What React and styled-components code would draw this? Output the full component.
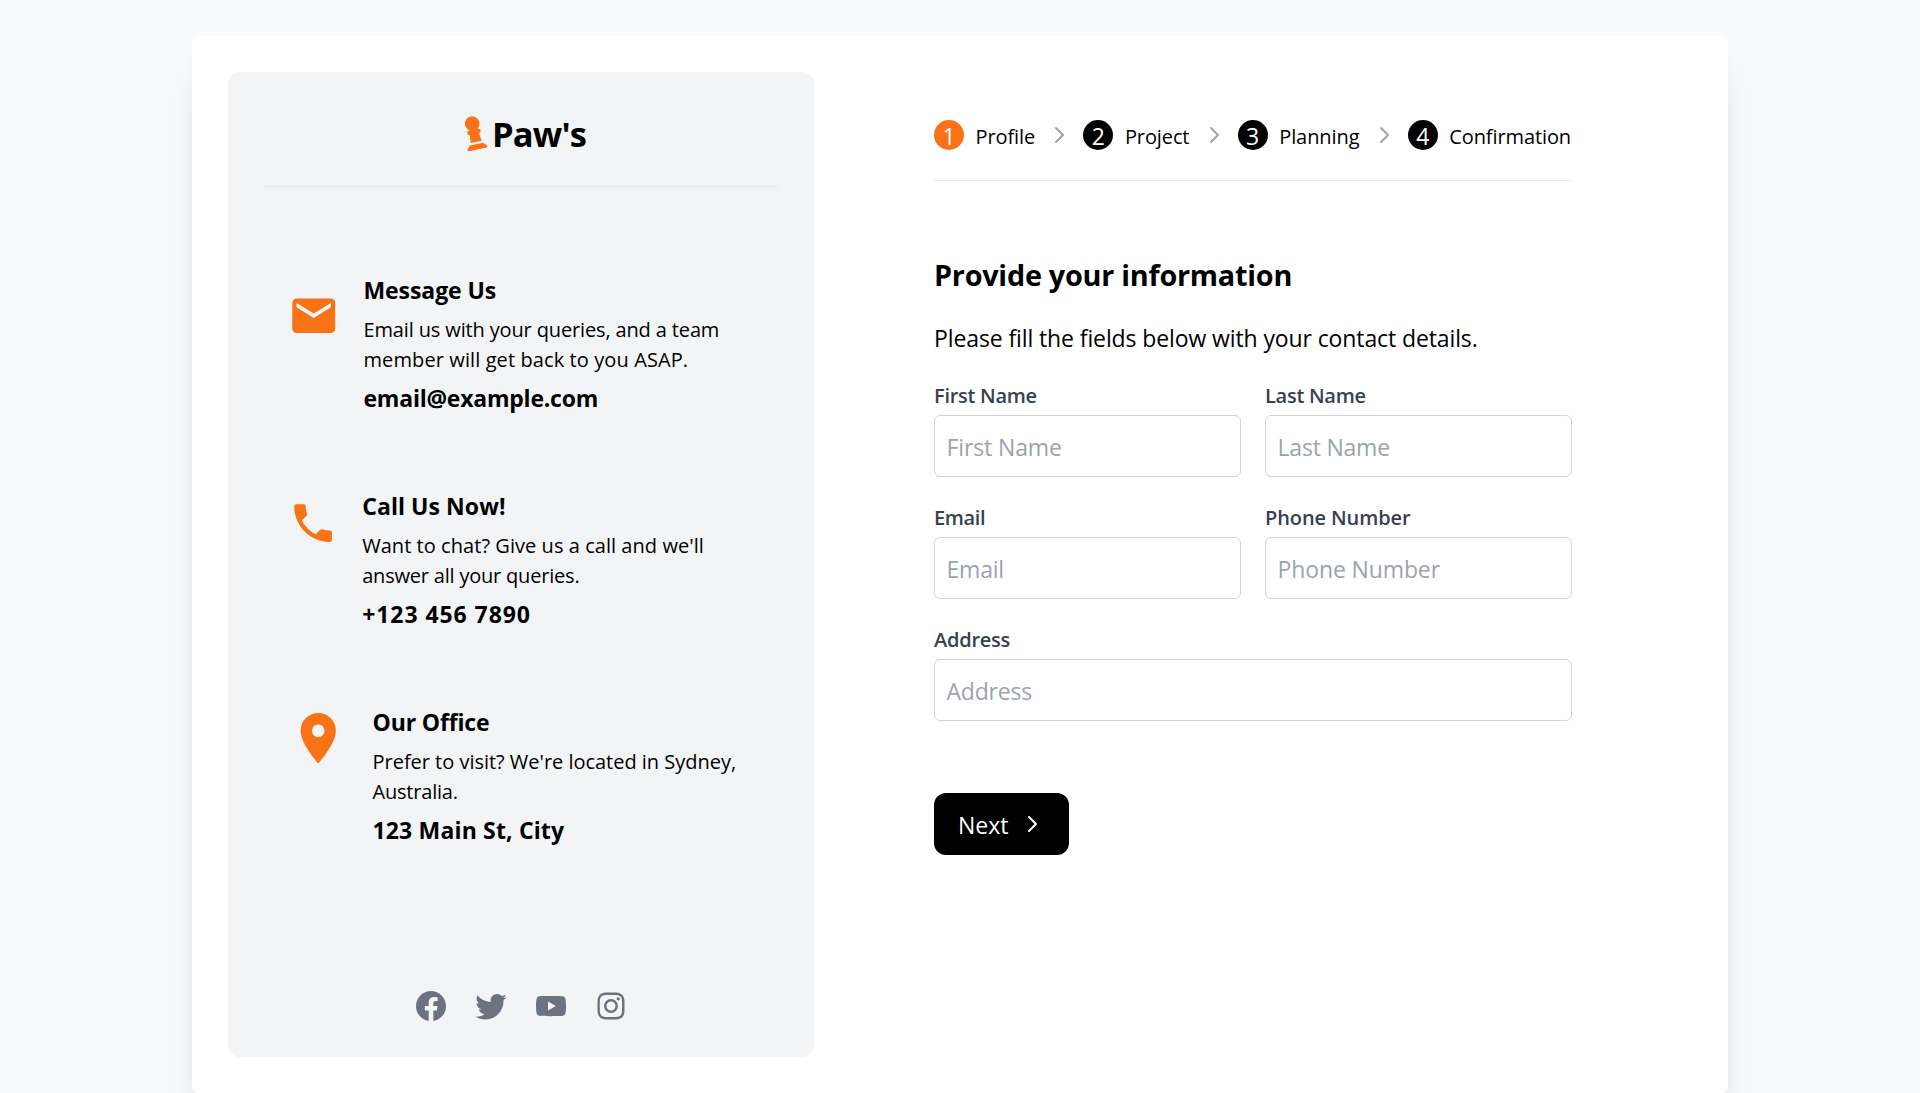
import React from 'react';
import styled, { createGlobalStyle } from 'styled-components';
import { FaChessPawn } from 'react-icons/fa6';
import { MdEmail, MdPhone, MdLocationOn } from 'react-icons/md';
import { BiLogoInstagram } from 'react-icons/bi';

const GlobalStyle = createGlobalStyle`
  *, *::before, *::after { box-sizing: border-box; }
  body {
    margin: 0;
    background: #f8fafc;
    color: #000;
    font-family: "Open Sans", "Noto Sans", sans-serif;
  }
  h1, h2, h3, p { margin: 0; }
`;

const Page = styled.div`
  height: 1093px;
  padding: 36px 192px 0;
  overflow: hidden;
`;

const Card = styled.main`
  display: flex;
  height: 1057px;
  padding: 36px;
  background: #fff;
  border-radius: 6px;
  box-shadow: 0 30px 37.5px -7.5px rgba(0, 0, 0, 0.1), 0 12px 15px -9px rgba(0, 0, 0, 0.1);
`;

const Sidebar = styled.aside`
  display: flex;
  flex-direction: column;
  flex: none;
  width: 586px;
  padding: 36px 36px 33px;
  background: #f3f4f6;
  border-radius: 12px;
`;

const Brand = styled.header`
  display: flex;
  align-items: center;
  justify-content: center;
  height: 79px;
  padding-bottom: 28px;
  border-bottom: 1px solid #e5e7eb;
`;

const BrandIcon = styled(FaChessPawn)`
  width: 36px;
  height: 36px;
  margin-bottom: 2px;
  color: #f97316;
  transform: rotate(-12deg);
`;

const BrandName = styled.h1`
  padding-top: 2px;
  font-size: 34.5px;
  font-weight: 700;
  line-height: 50px;
  letter-spacing: -0.9px;
`;

const Contacts = styled.div`
  display: flex;
  flex-direction: column;
  gap: 72px;
  padding: 85px 24px 0;
`;

const Contact = styled.section`
  display: flex;
  gap: 24px;
  height: 144px;

  > svg {
    flex: none;
    width: ${p => p.$icon}px;
    height: ${p => p.$icon}px;
    margin-top: ${p => p.$drop}px;
    color: #f97316;
  }
`;

const ContactText = styled.div`
  display: flex;
  flex-direction: column;
  white-space: nowrap;
`;

const Strong = styled.h3`
  font-size: 23px;
  font-weight: 700;
  line-height: 36px;
  letter-spacing: ${p => p.$track || 0}px;
`;

const Description = styled.p`
  padding: 7px 0 5px;
`;

const Line = styled.span`
  display: block;
  font-size: 20px;
  line-height: 30px;
  letter-spacing: ${p => p.$track || 0}px;
`;

const Social = styled.nav`
  display: flex;
  justify-content: center;
  gap: 24px;
  margin-top: auto;

  svg {
    width: 36px;
    height: 36px;
    color: #6b7280;
    fill: currentColor;
  }
`;

const Content = styled.section`
  flex: 1;
  padding: 48px 120px 0;
`;

const Steps = styled.div`
  display: flex;
  align-items: center;
  justify-content: space-between;
  height: 61px;
  padding: 0 1px 30px 0;
  border-bottom: 1px solid #e5e7eb;
`;

const Step = styled.div`
  display: flex;
  gap: 11.5px;
  font-size: 20px;
  line-height: 33px;
  height: 30px;
  letter-spacing: ${p => p.$track || 0}px;
`;

const Badge = styled.span`
  width: 30px;
  height: 30px;
  border-radius: 50%;
  background: ${p => (p.$active ? '#f97316' : '#000')};
  color: #fff;
  font-size: 23px;
  line-height: 32px;
  letter-spacing: 0;
  text-align: center;
`;

const ChevronSvg = styled.svg`
  flex: none;
  width: 24px;
  height: 24px;
  color: ${p => p.$color};
`;

const Title = styled.h2`
  margin-top: 76px;
  font-size: 28.8px;
  font-weight: 700;
  line-height: 36px;
  letter-spacing: -0.25px;
`;

const Intro = styled.p`
  margin-top: 27px;
  font-size: 23px;
  line-height: 36px;
  letter-spacing: -0.11px;
`;

const Fields = styled.div`
  display: grid;
  grid-template-columns: 1fr 1fr;
  gap: 25px 24px;
  margin-top: 24px;
`;

const Field = styled.label`
  display: flex;
  flex-direction: column;
  gap: 4px;
  grid-column: span ${p => p.$span || 1};
  height: 97px;
  padding-top: 1px;
  color: #374151;
  font-size: 20px;
  font-weight: 600;
  line-height: 30px;
  letter-spacing: ${p => p.$track || 0}px;
`;

const Input = styled.input`
  width: 100%;
  height: 62px;
  padding: 2px 11.5px 0;
  border: 1px solid #d1d5db;
  border-radius: 6px;
  background: #fff;
  color: #000;
  font: 400 23px "Open Sans", "Noto Sans", sans-serif;
  letter-spacing: ${p => p.$track || 0}px;

  &::placeholder { color: #9ca3af; opacity: 1; }
`;

const NextButton = styled.button`
  display: flex;
  align-items: center;
  justify-content: space-between;
  width: 135px;
  height: 62px;
  margin-top: 72px;
  padding: 0 25px 0 24px;
  border: 0;
  border-radius: 12px;
  background: #000;
  color: #fff;
  font: 400 23px/36px "Open Sans", "Noto Sans", sans-serif;

  span { padding-top: 2px; }
`;

const Chevron = ({ color = '#9ca3af' }) => (
  <ChevronSvg $color={color} viewBox="0 0 24 24" fill="none" stroke="currentColor" strokeWidth="2" strokeLinecap="round" strokeLinejoin="round">
    <path d="M9 5l7 7-7 7" />
  </ChevronSvg>
);

const contacts = [
  {
    Icon: MdEmail, icon: 51.5, drop: 18,
    title: ['Message Us', -0.08],
    lines: [['Email us with your queries, and a team', -0.14], ['member will get back to you ASAP.', 0.1]],
    value: ['email@example.com', -0.23],
  },
  {
    Icon: MdPhone, icon: 50.2, drop: 10,
    title: ['Call Us Now!', 0.07],
    lines: [["Want to chat? Give us a call and we'll", 0.05], ['answer all your queries.', -0.2]],
    value: ['+123 456 7890', 0.93],
  },
  {
    Icon: MdLocationOn, icon: 60.5, drop: 4.2,
    title: ['Our Office', -0.14],
    lines: [["Prefer to visit? We're located in Sydney,", -0.02], ['Australia.', -0.2]],
    value: ['123 Main St, City', 0.16],
  },
];

const steps = [['Profile', -0.1], ['Project', -0.1], ['Planning', -0.08], ['Confirmation', -0.1]];

const fields = [
  { name: 'First Name', label: -0.27, hint: -0.12 },
  { name: 'Last Name', label: -0.27, hint: -0.2 },
  { name: 'Email', label: -0.35, hint: -0.2 },
  { name: 'Phone Number', label: -0.1, hint: -0.12 },
  { name: 'Address', label: -0.25, hint: -0.2, span: 2 },
];

export default function App() {
  return (
    <Page>
      <GlobalStyle />
      <Card>
        <Sidebar>
          <Brand>
            <BrandIcon />
            <BrandName>Paw's</BrandName>
          </Brand>
          <Contacts>
            {contacts.map(({ Icon, icon, drop, title, lines, value }) => (
              <Contact key={title[0]} $icon={icon} $drop={drop}>
                <Icon />
                <ContactText>
                  <Strong $track={title[1]}>{title[0]}</Strong>
                  <Description>
                    {lines.map(([text, track]) => <Line key={text} $track={track}>{text}</Line>)}
                  </Description>
                  <Strong as="p" $track={value[1]}>{value[0]}</Strong>
                </ContactText>
              </Contact>
            ))}
          </Contacts>
          <Social>
            <svg viewBox="0 0 24 24"><path d="M12 2.04C6.5 2.04 2 6.53 2 12.06C2 17.06 5.66 21.21 10.44 21.96V14.96H7.9V12.06H10.44V9.85C10.44 7.34 11.93 5.96 14.22 5.96C15.31 5.96 16.45 6.15 16.45 6.15V8.62H15.19C13.95 8.62 13.56 9.39 13.56 10.18V12.06H16.34L15.89 14.96H13.56V21.96A10 10 0 0 0 22 12.06C22 6.53 17.5 2.04 12 2.04Z" /></svg>
            <svg viewBox="0 0 24 24"><path d="M22.46 6c-.77.35-1.6.58-2.46.69.88-.53 1.56-1.37 1.88-2.38-.83.5-1.75.85-2.72 1.05C18.37 4.5 17.26 4 16 4c-2.35 0-4.27 1.92-4.27 4.29 0 .34.04.67.11.98C8.28 9.09 5.11 7.38 3 4.79c-.37.63-.58 1.37-.58 2.15 0 1.49.75 2.81 1.91 3.56-.71 0-1.37-.2-1.95-.5v.03c0 2.08 1.48 3.82 3.44 4.21a4.22 4.22 0 0 1-1.93.07 4.28 4.28 0 0 0 4 2.98 8.521 8.521 0 0 1-5.33 1.84c-.34 0-.68-.02-1.02-.06C3.44 20.29 5.7 21 8.12 21 16 21 20.33 14.46 20.33 8.79c0-.19 0-.37-.01-.56.84-.6 1.56-1.36 2.14-2.23z" /></svg>
            <svg viewBox="0 0 24 24"><path d="M10 15L15.19 12L10 9V15M21.56 7.17C21.69 7.64 21.78 8.27 21.84 9.07C21.91 9.87 21.94 10.56 21.94 11.16L22 12C22 14.19 21.84 15.8 21.56 16.83C21.31 17.73 20.73 18.31 19.83 18.5C19.36 18.6 18.5 18.65 17.18 18.68C15.88 18.7 14.69 18.72 13.59 18.72L12 18.75C7.81 18.75 5.2 18.7 4.17 18.5C3.27 18.31 2.69 17.73 2.44 16.83C2.31 16.36 2.22 15.73 2.16 14.93C2.09 14.13 2.06 13.44 2.06 12.84L2 12C2 9.81 2.16 8.2 2.44 7.17C2.69 6.27 3.27 5.69 4.17 5.5C4.64 5.4 5.5 5.35 6.82 5.32C8.12 5.3 9.31 5.28 10.41 5.28L12 5.25C16.19 5.25 18.8 5.3 19.83 5.5C20.73 5.69 21.31 6.27 21.56 7.17Z" /></svg>
            <BiLogoInstagram />
          </Social>
        </Sidebar>
        <Content>
          <Steps>
            {steps.map(([name, track], i) => (
              <React.Fragment key={name}>
                {i > 0 && <Chevron />}
                <Step $track={track}>
                  <Badge $active={i === 0}>{i + 1}</Badge>
                  {name}
                </Step>
              </React.Fragment>
            ))}
          </Steps>
          <Title>Provide your information</Title>
          <Intro>Please fill the fields below with your contact details.</Intro>
          <Fields>
            {fields.map(f => (
              <Field key={f.name} $span={f.span} $track={f.label}>
                {f.name}
                <Input placeholder={f.name} $track={f.hint} />
              </Field>
            ))}
          </Fields>
          <NextButton type="button">
            <span>Next</span>
            <Chevron color="#fff" />
          </NextButton>
        </Content>
      </Card>
    </Page>
  );
}
